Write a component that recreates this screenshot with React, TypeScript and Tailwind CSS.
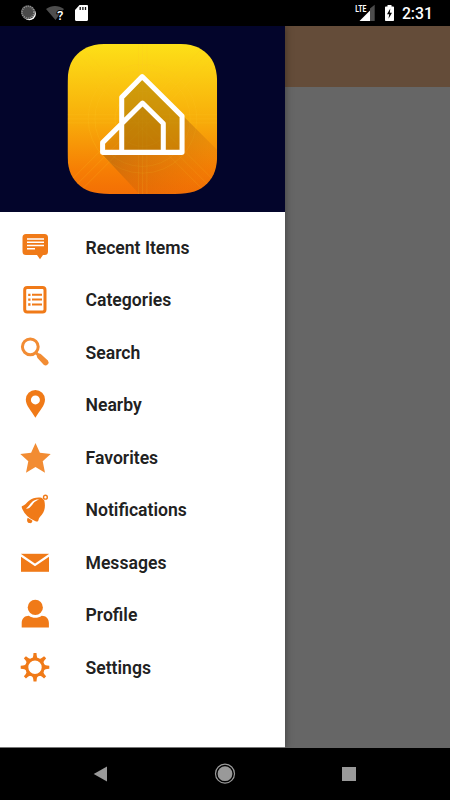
import type { ReactNode } from "react";

const menu: { label: string; icon: ReactNode }[] = [
  {
    label: "Recent Items",
    icon: (
      <>
        <path
          d="M7 2h18.500a3.500 3.500 0 0 1 3.500 3.500v14a3.500 3.500 0 0 1-3.500 3.500H24l-3 4.300-3-4.300H7a3.500 3.500 0 0 1-3.500-3.500v-14A3.500 3.500 0 0 1 7 2z"
          fill="#f07a18"
        />
        <path d="M8 7h17M8 10.300h17M8 13.500h17M8 16.800h8" stroke="#fff" strokeWidth="1.500" />
      </>
    ),
  },
  {
    label: "Categories",
    icon: (
      <>
        <rect x="5.700" y="3.500" width="20.300" height="24.500" rx="2.500" fill="none" stroke="#f07a18" strokeWidth="3" />
        <path d="M13 10.800h10M13 15.600h10M13 20.500h10" stroke="#f07a18" strokeWidth="2" />
        <path d="M9.200 10.800h2.300M9.200 15.600h2.300M9.200 20.500h2.300" stroke="#f07a18" strokeWidth="2.300" />
      </>
    ),
  },
  {
    label: "Search",
    icon: (
      <>
        <circle cx="11.300" cy="9.800" r="7.900" fill="none" stroke="#f28c33" strokeWidth="3" />
        <path d="M16.500 15.200l3.500 3.500" stroke="#f28c33" strokeWidth="3" />
        <path d="M18.500 17.300c1-1.200 2.700-.9 3.800.1l6.600 6.100a3 3 0 0 1-4.200 4.200l-6-6.500c-1-1.100-1.200-2.700-.2-3.900z" fill="#f28c33" />
      </>
    ),
  },
  {
    label: "Nearby",
    icon: (
      <path
        fillRule="evenodd"
        d="M16.400 1a9.600 9.600 0 0 1 9.600 9.600c0 6-5.500 11.500-9.600 18.200C12.300 22.100 6.800 16.600 6.800 10.600A9.600 9.600 0 0 1 16.400 1zm0 5.400a4.500 4.500 0 1 0 0 9 4.500 4.500 0 0 0 0-9z"
        fill="#f07a18"
      />
    ),
  },
  {
    label: "Favorites",
    icon: (
      <path
        d="M16.500 1l4.400 9.700 10.800 1.200-8 7.300 2.300 11.500-9.500-5.800L7 30.700l2.300-11.500-8-7.300 10.800-1.200z"
        fill="#f28c33"
      />
    ),
  },
  {
    label: "Notifications",
    icon: (
      <>
        <path
          d="M2.900 12.300C6 11.500 7.500 8.800 10 6.800 13.800 4 18 3 23 3.900l2.300 2.500c.9 4 1 8.300-1 12.100-1.800 3.300-4.500 4.700-5 8-.3 1.500-1.600 1.300-3.300.5C9.800 24.300 5.600 20 3.300 14.900c-.6-1.300-.8-2.200-.4-2.600z"
          fill="#f07a18"
        />
        <circle cx="26.400" cy="3.200" r="1.900" fill="#fff" stroke="#f07a18" strokeWidth="1.400" />
        <path d="M8.700 23.700l4.600 2.700c.3 2.100-1.300 3-2.800 2.700-2.300-.4-3.100-3-1.800-5.400z" fill="#f07a18" />
        <path d="M7 14.600c2.800-1.500 3.600-5 6.800-7.300 2-1.500 4-2 6.400-1.700-2.600.9-4.700 2.100-6.200 4.200-2 2.600-3.500 5.300-7 4.800z" fill="#fff" />
      </>
    ),
  },
  {
    label: "Messages",
    icon: (
      <>
        <path d="M2 6.800h28v18H2z" fill="#f07a18" />
        <path d="M1.500 8L16 18 30.500 8" fill="none" stroke="#fff" strokeWidth="2.200" />
      </>
    ),
  },
  {
    label: "Profile",
    icon: (
      <>
        <circle cx="16.300" cy="8.400" r="7.600" fill="#f07a18" />
        <path d="M2.700 28.500v-4.500c0-4.500 3-7.300 7.200-7.300 2 1.500 4.100 2.100 6.400 2.100s4.400-.6 6.400-2.100c4.200 0 7.200 2.800 7.200 7.300v4.500z" fill="#f07a18" />
      </>
    ),
  },
  {
    label: "Settings",
    icon: (
      <>
        <circle cx="16" cy="15.300" r="8.200" fill="none" stroke="#f07a18" strokeWidth="3" />
        {[0, 45, 90, 135, 180, 225, 270, 315].map((angle) => (
          <path
            key={angle}
            d="M11.800 7.200c1.600-.9 2.400-2 2.500-4L14.500 1h3l.2 2.200c.1 2 .9 3.100 2.500 4z"
            transform={`rotate(${angle} 16 15.300)`}
            fill="#f07a18"
          />
        ))}
      </>
    ),
  },
];

function StatusBar() {
  return (
    <div className="flex h-[26px] items-center bg-black text-white">
      <svg className="ml-[20px] h-[18px] w-[18px]" viewBox="0 0 18 18">
        <circle cx="9.300" cy="9.700" r="6.600" fill="#fff" />
        <circle cx="8" cy="8.200" r="7" fill="#4a4a4a" />
        <circle cx="8" cy="8.200" r="6" fill="none" stroke="#999" strokeWidth="1.600" strokeDasharray="1 1.100" />
      </svg>
      <svg className="ml-[7px] h-[18px] w-[20px]" viewBox="0 0 20 18">
        <path d="M1 5C6.500 1 13.500 1 19 5l-4 5-4.500 6z" fill="#4d4d4d" />
        <text
          x="12"
          y="16"
          fontSize="13"
          fontWeight="500"
          fill="#fff"
          stroke="#000"
          strokeWidth="2"
          paintOrder="stroke"
        >
          ?
        </text>
      </svg>
      <svg className="ml-[9px] h-[18px] w-[15px]" viewBox="0 0 15 18">
        <path d="M5.500 1h7.300c.7 0 1.200.5 1.200 1.200v13.600c0 .7-.5 1.200-1.200 1.200H2.200C1.500 17 1 16.500 1 15.800V6z" fill="#fff" />
        <path d="M6.200 3v3M8.900 3v3M11.500 3v3" stroke="#111" strokeWidth="1.300" />
      </svg>
      <svg className="ml-auto h-[18px] w-[21px]" viewBox="0 0 21 18">
        <path d="M15 4.500l4.700-3.700V17H15z" fill="#4d4d4d" />
        <path d="M4.500 17L15 6.500V17z" fill="#fff" />
        <text x="0.300" y="8.300" fontSize="9" fontWeight="700" fill="#fff" textLength="11" lengthAdjust="spacingAndGlyphs">
          LTE
        </text>
      </svg>
      <svg className="ml-[8px] h-[18px] w-[11px]" viewBox="0 0 11 18">
        <path d="M3.500 1h4v1.500h1.700c.5 0 .8.300.8.800v12.900c0 .5-.3.800-.8.800H1.800c-.5 0-.8-.3-.8-.8V3.300c0-.5.300-.8.800-.8h1.700z" fill="#fff" />
        <path d="M6.300 4.500L3 10.300h2.200l-.7 4.400L8 8.800H5.800z" fill="#000" />
      </svg>
      <span className="mr-[17px] ml-[7px] mt-[2.500px] text-[15.800px] leading-none font-medium">2:31</span>
    </div>
  );
}

function Logo() {
  return (
    <svg className="h-[165px] w-[165px]" viewBox="1 1 492 492">
      <defs>
        <linearGradient id="tile" x1="0" y1="0" x2="0" y2="1">
          <stop offset="0" stopColor="#fde018" />
          <stop offset="0.500" stopColor="#f8ae0a" />
          <stop offset="0.850" stopColor="#f67d04" />
          <stop offset="1" stopColor="#f36f05" />
        </linearGradient>
        <linearGradient id="shade" x1="0" y1="0" x2="1" y2="1">
          <stop offset="0.300" stopColor="#a05a10" stopOpacity="0.450" />
          <stop offset="0.750" stopColor="#c86008" stopOpacity="0.080" />
        </linearGradient>
        <clipPath id="tile-clip">
          <path d="M150 24H343C395 24 418 33 440 55C462 77 470 102 470 151V345C470 394 462 419 440 441C418 463 392 472 343 472H150C101 472 75 463 53 441C31 419 23 394 23 345V151C23 102 31 77 53 55C75 33 101 24 150 24z" />
        </clipPath>
      </defs>
      <g clipPath="url(#tile-clip)">
        <path d="M23 24h447v448H23z" fill="url(#tile)" />
        <g fill="none" stroke="#ffc928" strokeOpacity="0.300" strokeWidth="2">
          <circle cx="247" cy="248" r="162" />
          <circle cx="247" cy="248" r="142" />
          <circle cx="247" cy="248" r="82" />
          <path d="M23 24l447 448M470 24L23 472M53 24l417 418M23 54l417 418M440 24L23 442M470 54L53 472" />
          <path d="M235 24v448M247 24v448M260 24v448M23 236h447M23 248h447M23 260h447" />
        </g>
        <path d="M366 237l120 120v150H270L126 353h240z" fill="url(#shade)" />
      </g>
      <path d="M186 184l61-62 118 118v108H186z" fill="#9b6a05" fillOpacity="0.450" />
      <path d="M128 348v-28l119-119 62 61v86z" fill="#a46205" fillOpacity="0.250" />
      <path
        d="M185 348V184l61-62 119 118v108H128v-29L247 201l62 61v86"
        fill="none"
        stroke="#fff"
        strokeWidth="15"
        strokeLinejoin="round"
      />
    </svg>
  );
}

function Drawer() {
  return (
    <aside className="z-10 flex w-[284.500px] shrink-0 flex-col border-b border-[#777] bg-white shadow-[0_0_8px_rgba(0,0,0,0.400)]">
      <div className="flex h-[186px] shrink-0 justify-center bg-[#03052b] pt-[10px]">
        <Logo />
      </div>
      <nav className="pt-[9.500px]">
        {menu.map((item) => (
          <a key={item.label} className="flex h-[52.500px] items-center pl-[19px]">
            <svg className="h-8 w-8" viewBox="0 0 32 32">
              {item.icon}
            </svg>
            <span className="ml-[34.500px] text-[17.600px] font-semibold text-[#212121]">{item.label}</span>
          </a>
        ))}
      </nav>
    </aside>
  );
}

function NavigationBar() {
  return (
    <div className="flex h-[52px] items-center justify-between bg-black pr-[94.500px] pl-[92px]">
      <svg className="h-4 w-4" viewBox="0 0 16 16">
        <path d="M1.700 8L15 .4v15.200z" fill="#999" />
      </svg>
      <svg className="h-[22px] w-[22px]" viewBox="0 0 22 22">
        <circle cx="11" cy="10.700" r="9.500" fill="none" stroke="#999" strokeWidth="1.200" />
        <circle cx="11" cy="10.700" r="7.400" fill="#999" />
      </svg>
      <div className="h-[14px] w-[14px] bg-[#999]" />
    </div>
  );
}

export default function App() {
  return (
    <div className="flex h-[800px] w-[450px] flex-col overflow-hidden bg-black font-['Roboto',sans-serif]">
      <StatusBar />
      <div className="flex h-[722px] overflow-hidden bg-[#666]">
        <Drawer />
        <div className="h-[61px] flex-1 bg-[#644c39]" />
      </div>
      <NavigationBar />
    </div>
  );
}
